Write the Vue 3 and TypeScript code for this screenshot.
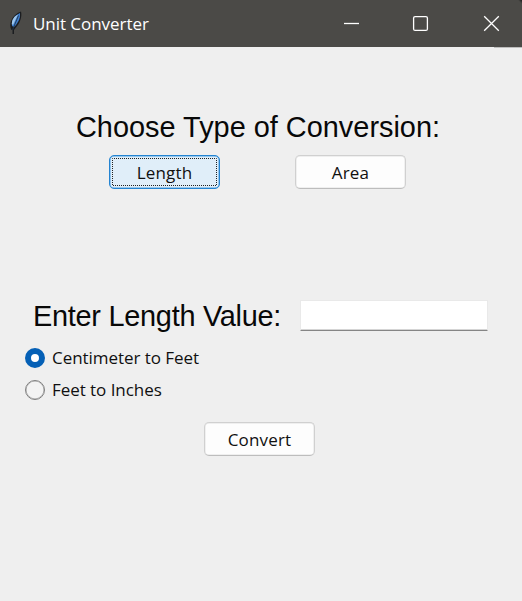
<script setup lang="ts">
import { ref } from 'vue'

type Kind = 'Length' | 'Area'

const kinds: Kind[] = ['Length', 'Area']
const kind = ref<Kind>('Length')
const options = ['Centimeter to Feet', 'Feet to Inches']
const selected = ref(options[0])
const amount = ref('')
</script>

<template>
  <div class="window">
    <header class="titlebar">
      <svg class="feather" width="16" height="26" viewBox="0 0 16 26">
        <path d="M4.500 20 C1.500 15 4 5 14 1.500 C15.500 7 12.500 14 8.500 18 L7 20 V24 H5.500 V20 Z" fill="#1b1d20" />
        <path d="M5 16 C4 11 7 6 13 3 C13.500 9 10.500 13.500 7 17 Z" fill="#3f7fcf" />
        <path d="M4.800 14 C5 9 7.500 6 11 4.500 L6 15 Z" fill="#9fc6ea" />
        <path d="M11.500 5.500 L5.500 20" stroke="#20344c" stroke-width="0.9" />
      </svg>
      <span class="title">Unit Converter</span>
      <div class="controls">
        <svg width="17" height="17" viewBox="0 0 17 17"><path d="M1 8.500H16" /></svg>
        <svg class="maximize" width="17" height="17" viewBox="0 0 17 17"><rect x="1.600" y="1.600" width="13.800" height="13.800" rx="1.500" /></svg>
        <svg width="17" height="17" viewBox="0 0 17 17"><path d="M1.200 1.200L15.800 15.800M15.800 1.200L1.200 15.800" /></svg>
      </div>
    </header>
    <div class="edge"></div>
    <main class="content">
      <h1 class="heading">Choose Type of Conversion:</h1>
      <div class="kinds">
        <button v-for="k in kinds" :key="k" class="button" :class="{ active: kind === k }" @click="kind = k">
          <svg v-if="kind === k" class="focus" width="105" height="28" viewBox="0 0 105 28">
            <rect x="0.500" y="0.500" width="104" height="27" />
          </svg>
          <span>{{ k }}</span>
        </button>
      </div>
      <div class="entry">
        <label class="heading" for="amount">Enter Length Value:</label>
        <input id="amount" v-model="amount" class="field" type="text" />
      </div>
      <div class="options">
        <label v-for="o in options" :key="o" class="option">
          <input v-model="selected" class="radio" type="radio" name="conversion" :value="o" />
          <span>{{ o }}</span>
        </label>
      </div>
      <button class="button convert"><span>Convert</span></button>
    </main>
  </div>
</template>

<style>
body {
  margin: 0;
  background: #efefef;
}
</style>

<style scoped>
.window {
  display: flex;
  flex-direction: column;
  width: 522px;
  height: 601px;
  overflow: hidden;
  background: #efefef;
  color: #101010;
  font: 17px/24px 'Open Sans', 'Noto Sans', sans-serif;
}
.titlebar {
  display: flex;
  align-items: center;
  box-sizing: border-box;
  height: 47px;
  padding: 0 22px 0 7px;
  background: linear-gradient(45deg, #4b4a47 calc(100% - 3px), #1c1c1c 100%);
  color: #fff;
}
.edge {
  align-self: flex-end;
  width: 28px;
  height: 1px;
  background: #bdbdbd;
}
.feather {
  margin-top: -1px;
}
.title {
  margin-left: 10px;
  letter-spacing: -0.05px;
}
.controls {
  display: flex;
  gap: 53px;
  margin-left: auto;
}
.controls svg {
  fill: none;
  stroke: #fff;
  stroke-width: 1.3;
}
.controls .maximize {
  margin: 0 1px 0 -1px;
}
.content {
  display: flex;
  flex-direction: column;
}
.heading {
  margin: 0;
  color: #080808;
  font: 400 28.9px/34px 'Liberation Sans', Arial, sans-serif;
  white-space: nowrap;
}
h1.heading {
  margin: 62px 0 0 76px;
}
.kinds {
  display: flex;
  gap: 75px;
  margin: 11px 0 0 109px;
}
.button {
  display: grid;
  place-items: center;
  box-sizing: border-box;
  width: 111px;
  height: 34px;
  padding: 0;
  border: 1px solid #d0d0d0;
  border-bottom-color: #bdbdbd;
  border-radius: 5px;
  background: #fdfdfd;
  box-shadow: inset 0 0 0 0.5px #e2e2e2;
  color: #101010;
  font: inherit;
  letter-spacing: 0.15px;
}
.button > * {
  grid-area: 1 / 1;
}
.button > span {
  padding-top: 2px;
  line-height: 22px;
}
.button.active {
  border-color: #2484d2;
  background: #e0eef9;
  box-shadow: inset 0 0 0 0.5px #4f9fdf;
}
.focus rect {
  fill: none;
  stroke: #222;
  stroke-dasharray: 1 1;
  stroke-dashoffset: 0.5;
}
.entry {
  display: flex;
  align-items: center;
  margin: 110px 0 0 33px;
}
.entry .heading {
  width: 267px;
  letter-spacing: -0.27px;
}
.field {
  box-sizing: border-box;
  width: 188px;
  height: 31px;
  margin-top: -2px;
  padding: 0 6px;
  border: 1px solid #e9e9e9;
  border-bottom-color: #858585;
  border-radius: 1px;
  background: #fff;
  box-shadow: inset 0 -1px #d5d5d5;
  font: inherit;
  outline: none;
}
.options {
  display: flex;
  flex-direction: column;
  gap: 8px;
  margin: 13px 0 0 25px;
}
.option {
  display: flex;
  align-items: center;
  gap: 7px;
  letter-spacing: -0.05px;
}
.radio {
  appearance: none;
  box-sizing: border-box;
  width: 20px;
  height: 20px;
  margin: 0;
  border: 1px solid #808080;
  border-radius: 50%;
  background: #f3f3f3;
  box-shadow: inset 0 0 0 0.5px #a0a0a0;
}
.radio:checked {
  border: 6px solid #0560b6;
  background: #fff;
  box-shadow: none;
}
.convert {
  margin: 20px 0 0 204px;
}
</style>
